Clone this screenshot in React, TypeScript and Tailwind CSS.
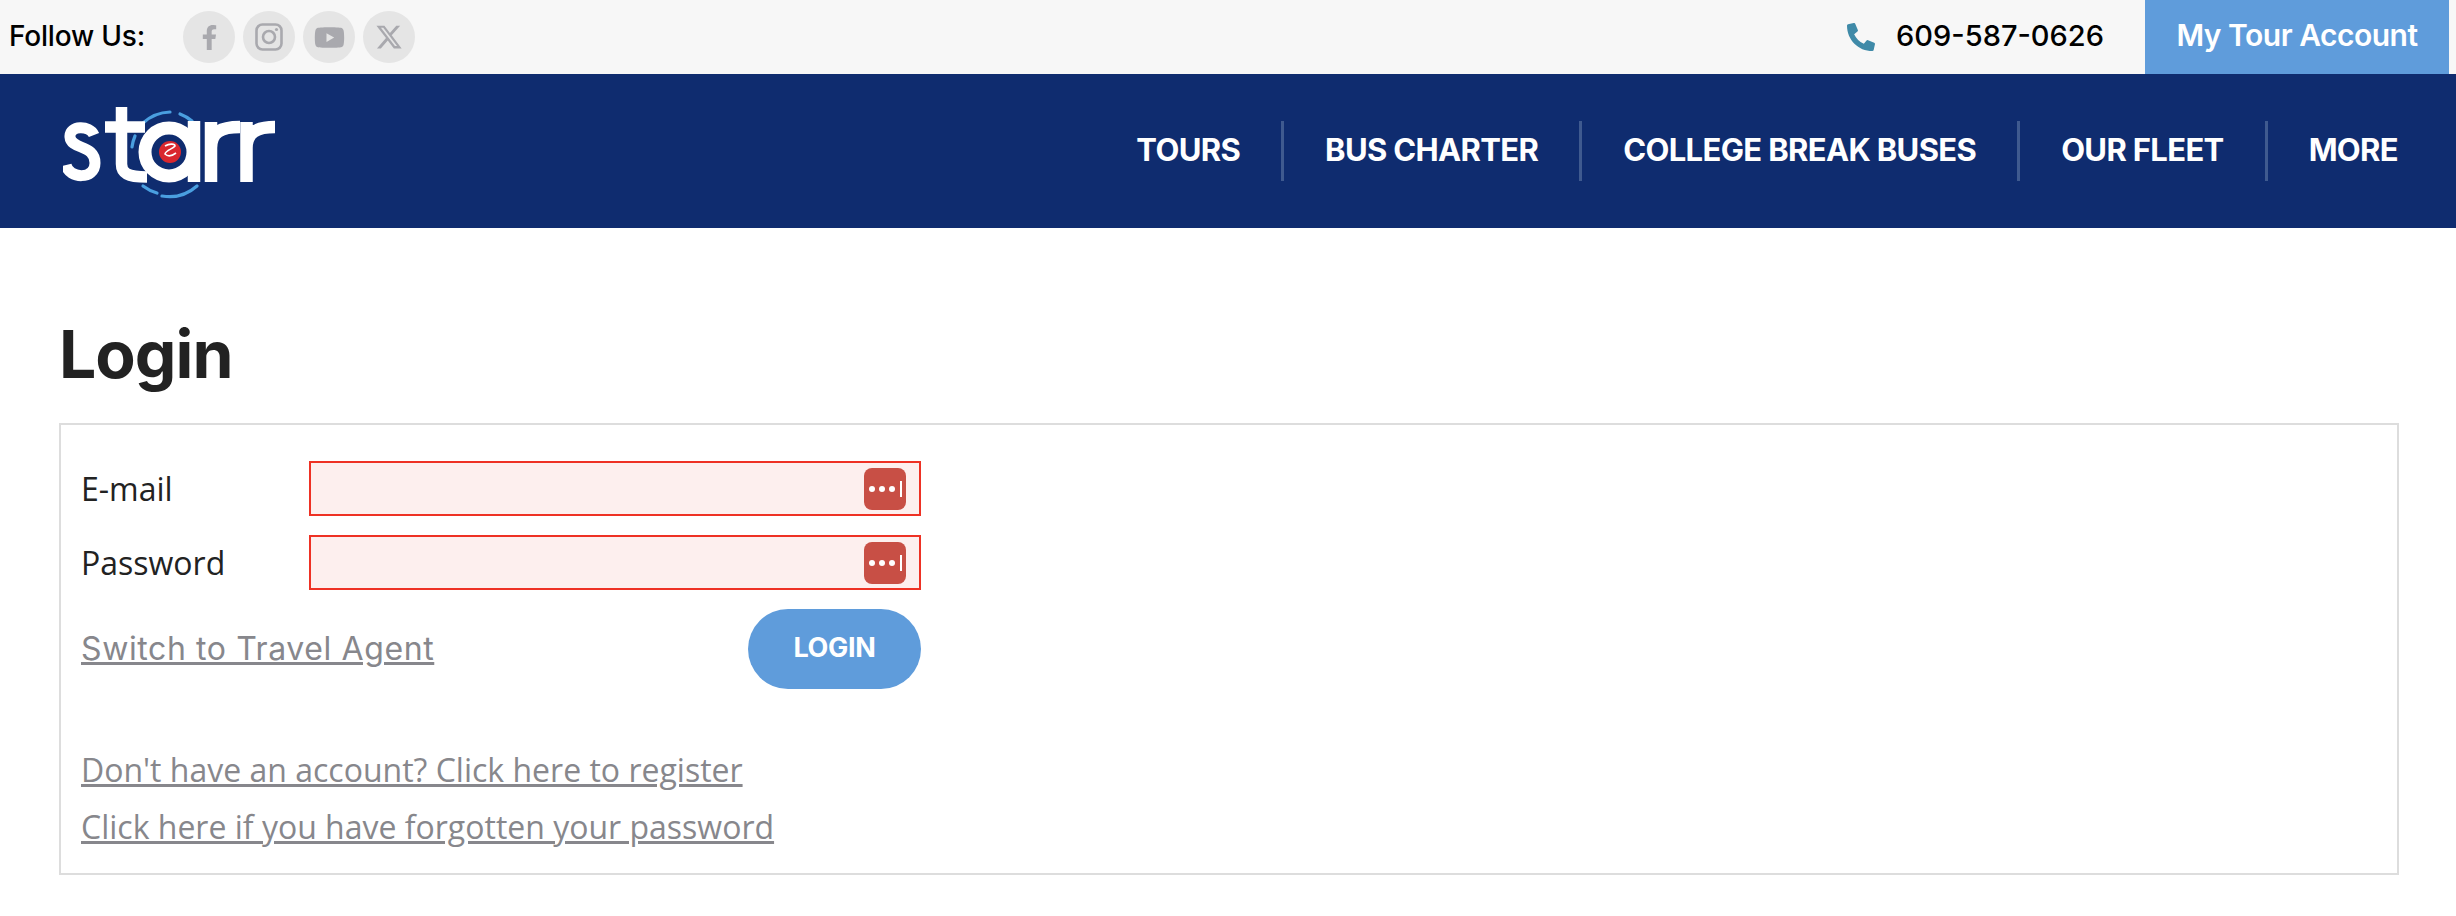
import { FaFacebookF, FaYoutube, FaPhoneAlt } from "react-icons/fa";
import { FaXTwitter } from "react-icons/fa6";

function Logo() {
  return (
    <svg width="220" height="98" viewBox="0 0 220 98" role="img" aria-label="starr logo" fill="none" className="block">
      <g stroke="#4a9fe0" strokeWidth="3.2" strokeLinecap="round">
        <path d="M80 21 A42 42 0 0 1 107 10" />
        <path d="M117 12 A42 42 0 0 1 129 19" />
        <path d="M72 34 A42 42 0 0 0 69 45" />
        <path d="M80 84 A42 42 0 0 0 94 91" />
        <path d="M99 94 A42 42 0 0 0 134 84" />
      </g>
      <path d="M31 33 C27 23 6 23 7 35 C8 48 32 42 32 61 C32 78 6 77 3 63" stroke="#fff" strokeWidth="11" />
      <path d="M58.5 5 V62 C58.5 71 64 75 84 75 M42 25 H82" stroke="#fff" strokeWidth="11.5" />
      <circle cx="106" cy="50" r="24" stroke="#fff" strokeWidth="13" />
      <path d="M131 19 V80" stroke="#fff" strokeWidth="12.5" />
      <path d="M148 80 V20 M148 46 C148 30 158 25 177 25" stroke="#fff" strokeWidth="12.5" />
      <path d="M183.5 80 V20 M183.5 46 C183.5 30 194 25 212 25" stroke="#fff" strokeWidth="12.5" />
      <circle cx="107" cy="50" r="11" fill="#d9272e" />
      <path d="M102 44 C107 41 112 42 112 44 C110 47 103 48 102 52 C105 55 109 54 113 51" stroke="#fff" strokeWidth="1.6" />
    </svg>
  );
}

function Instagram() {
  return (
    <svg width="28" height="28" viewBox="0 0 28 28" fill="none" stroke="#a9a9ae" strokeWidth="2.6">
      <rect x="1.5" y="1.5" width="25" height="25" rx="6" />
      <circle cx="14" cy="14" r="6" />
      <circle cx="21.5" cy="6.5" r="1.6" fill="#a9a9ae" stroke="none" />
    </svg>
  );
}

function Social({ children }: { children: React.ReactNode }) {
  return (
    <span className="flex h-[52px] w-[52px] items-center justify-center rounded-full bg-[#e5e5e5] text-[#a9a9ae]">
      {children}
    </span>
  );
}

function KeyIcon() {
  return (
    <span className="flex h-[42px] w-[42px] items-center gap-[4px] rounded-[8px] bg-[#c84f45] pl-[5px]">
      <span className="h-[6px] w-[6px] rounded-full bg-white" />
      <span className="h-[6px] w-[6px] rounded-full bg-white" />
      <span className="h-[6px] w-[6px] rounded-full bg-white" />
      <span className="ml-px h-[16px] w-[2px] bg-white" />
    </span>
  );
}

function Field({ label }: { label: string }) {
  return (
    <div className="flex items-center">
      <label className="w-[228px] text-[32px] leading-[44px] text-[#222]">{label}</label>
      <div className="flex h-[55px] w-[612px] items-center justify-end border-2 border-[#ee3124] bg-[#fdefee] pr-[13px]">
        <KeyIcon />
      </div>
    </div>
  );
}

function NavItem({ children }: { children: React.ReactNode }) {
  return <a className="mb-[3px] whitespace-nowrap text-[31px] font-bold leading-none tracking-[-0.65px] text-white">{children}</a>;
}

function Sep() {
  return <span className="mx-[41px] h-[60px] w-[3px] bg-[#3f5a8f]" />;
}

export default function App() {
  return (
    <div className="min-h-[916px] bg-white font-['Inter',sans-serif]">
      <div className="flex h-[74px] items-center bg-[#f7f7f7] pl-[9px]">
        <span className="mb-[3px] w-[174px] text-[28px] font-medium tracking-[-0.2px] text-black">Follow Us:</span>
        <div className="flex gap-[8px]">
          <Social><FaFacebookF size={25} /></Social>
          <Social><Instagram /></Social>
          <Social><FaYoutube size={31} /></Social>
          <Social><FaXTwitter size={28} /></Social>
        </div>
        <div className="ml-auto flex items-center">
          <FaPhoneAlt size={28} className="mr-[21px] text-[#3f8aa8]" />
          <span className="mb-[3px] mr-[41px] text-[29px] font-medium text-black">609-587-0626</span>
          <a className="mr-[7px] flex h-[74px] w-[304px] items-center justify-center bg-[#5f9cdb] pb-[3px] text-[30px] font-semibold tracking-[-0.5px] text-white">
            My Tour Account
          </a>
        </div>
      </div>

      <header className="flex h-[154px] items-center justify-between bg-[#0f2c6f] pl-[63px] pr-[58px]">
        <Logo />
        <nav className="flex items-center">
          <NavItem>TOURS</NavItem>
          <Sep />
          <NavItem>BUS CHARTER</NavItem>
          <Sep />
          <NavItem>COLLEGE BREAK BUSES</NavItem>
          <Sep />
          <NavItem>OUR FLEET</NavItem>
          <Sep />
          <NavItem>MORE</NavItem>
        </nav>
      </header>

      <main className="pl-[59px] pr-[57px] pt-[88px]">
        <h1 className="mb-[30px] text-[66px] font-bold leading-[77px] tracking-[-1px] text-[#222]">Login</h1>
        <section className="h-[452px] border-2 border-[#dddddd] pl-[20px] pt-[36px] font-['Open_Sans',sans-serif]">
          <div className="flex flex-col gap-[19px]">
            <Field label="E-mail" />
            <Field label="Password" />
          </div>
          <div className="mt-[19px] flex h-[80px] w-[840px] items-center justify-between">
            <a className="font-['Inter',sans-serif] text-[32px] tracking-[0.6px] text-[#87878c] underline">Switch to Travel Agent</a>
            <button className="h-[80px] w-[173px] rounded-full bg-[#5f9cdb] pb-[2px] font-['Inter',sans-serif] text-[27px] font-bold tracking-[-0.3px] text-white">LOGIN</button>
          </div>
          <div className="mt-[60px] flex flex-col gap-[15px] text-[32px] leading-[42px] text-[#87878c]">
            <a className="underline">Don't have an account? Click here to register</a>
            <a className="underline">Click here if you have forgotten your password</a>
          </div>
        </section>
      </main>
    </div>
  );
}
